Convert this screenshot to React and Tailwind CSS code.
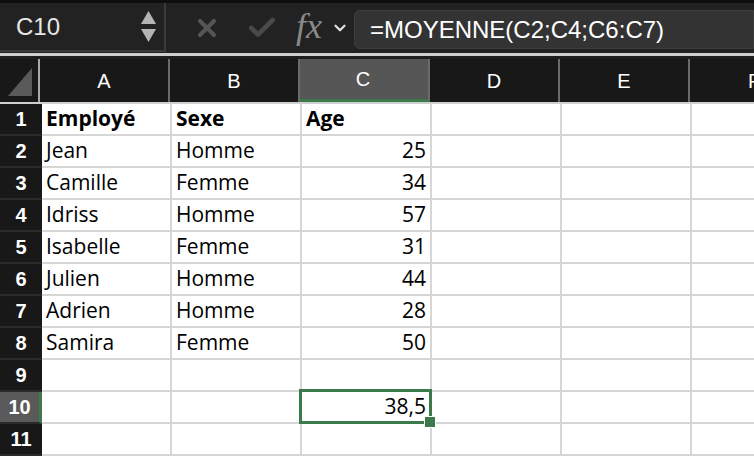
import { Check, X, ChevronDown } from 'lucide-react';

const columns = ['A', 'B', 'C', 'D', 'E', 'F'];

const rows = [
  ['Employé', 'Sexe', 'Age'],
  ['Jean', 'Homme', 25],
  ['Camille', 'Femme', 34],
  ['Idriss', 'Homme', 57],
  ['Isabelle', 'Femme', 31],
  ['Julien', 'Homme', 44],
  ['Adrien', 'Homme', 28],
  ['Samira', 'Femme', 50],
  ['', '', ''],
  ['', '', 38.5],
  ['', '', ''],
];

const cellFont = { fontFamily: '"Open Sans", "Liberation Sans", sans-serif' };
const uiFont = { fontFamily: '"Liberation Sans", sans-serif' };

const Toolbar = () => (
  <div className="h-[53px] bg-[#222222] border-t-[3px] border-[#0e0e0e] flex items-stretch">
    {/* Name box */}
    <div className="w-[166px] mb-[1px] border-r-2 border-b-2 border-[#3b3b3b] flex items-center justify-between pl-4 pr-2">
      <span className="text-[24px] text-[#e8e8e8]" style={uiFont}>C10</span>
      <div className="flex flex-col gap-[5px]">
        <svg width="15" height="13" viewBox="0 0 15 13"><path d="M7.5 0 L15 13 H0 Z" fill="#b5b5b5" /></svg>
        <svg width="15" height="13" viewBox="0 0 15 13"><path d="M0 0 H15 L7.5 13 Z" fill="#b5b5b5" /></svg>
      </div>
    </div>
    <div className="flex items-center pl-[27px]">
      <X size={28} strokeWidth={3.5} color="#555555" />
      <Check size={32} strokeWidth={3.5} color="#4a4a4a" className="ml-[25px]" />
      <span className="ml-[18px] text-[36px] italic text-[#8a8a8a] leading-none -mt-[4px]" style={{ fontFamily: '"Liberation Serif", serif' }}>fx</span>
      <ChevronDown size={18} strokeWidth={3} color="#e0e0e0" className="ml-[9px]" />
    </div>
    <div className="flex-1 ml-[5px] mt-[7px] mb-[4px] bg-[#333333] rounded-l-md border border-[#3d3d3d] flex items-center pl-[15px]">
      <span className="text-[24px] text-white" style={uiFont}>=MOYENNE(C2;C4;C6:C7)</span>
    </div>
  </div>
);

export default function App() {
  return (
    <div className="w-[754px] h-[460px] overflow-hidden bg-white">
      <Toolbar />
      <div className="h-[3px] bg-[#cfcfcf]" />
      <div className="h-[3px] bg-[#1e1e1e]" />
      {/* Column headers */}
      <div className="flex h-[45px] bg-[#181818] border-b-2 border-[#d0d0d0]">
        <div className="w-[40px] shrink-0 border-r-2 border-[#a8a8a8] flex items-end justify-end p-[6px]">
          <svg width="24" height="28" viewBox="0 0 24 28"><path d="M24 0 V28 H0 Z" fill="#5a5a5a" /></svg>
        </div>
        {columns.map(c => (
          <div
            key={c}
            className={`w-[130px] shrink-0 border-r-2 border-[#6a6a6a] flex items-center justify-center text-[20px] text-white ${c === 'C' ? 'bg-[#565656] border-b-[3px] border-b-[#3c7a4c] border-r-0 pr-[2px]' : ''}`}
            style={uiFont}
          >
            {c}
          </div>
        ))}
      </div>
      {/* Rows */}
      {rows.map((r, i) => {
        const n = i + 1;
        const sel = n === 10;
        return (
          <div key={n} className="flex h-[32px]">
            <div
              className={`w-[42px] shrink-0 flex items-center justify-center text-[20px] font-bold text-white border-b-2 border-[#2a2a2a] ${sel ? 'bg-[#5a5a5a] border-r-[3px] border-r-[#3c7a4c]' : 'bg-[#181818]'}`}
              style={uiFont}
            >
              {n}
            </div>
            {columns.map((c, j) => {
              const v = r[j] ?? '';
              const num = typeof v === 'number';
              const isSel = sel && c === 'C';
              return (
                <div
                  key={c}
                  className={`relative w-[130px] shrink-0 border-r-2 border-b-2 border-[#d6d6d6] flex items-center text-[21px] text-black ${num ? 'justify-end pr-[4px]' : 'pl-[4px]'} ${n === 1 ? 'font-bold' : ''} ${isSel ? 'z-10' : ''}`}
                  style={cellFont}
                >
                  {num ? String(v).replace('.', ',') : v}
                  {isSel && (
                    <>
                      <div className="absolute -left-[3px] -top-[3px] -right-[2px] -bottom-[2px] border-[3px] border-[#3c7a4c] pointer-events-none" />
                      <div className="absolute -right-[6px] -bottom-[6px] w-[12px] h-[12px] bg-[#3c7a4c] border border-white" />
                    </>
                  )}
                </div>
              );
            })}
          </div>
        );
      })}
    </div>
  );
}
